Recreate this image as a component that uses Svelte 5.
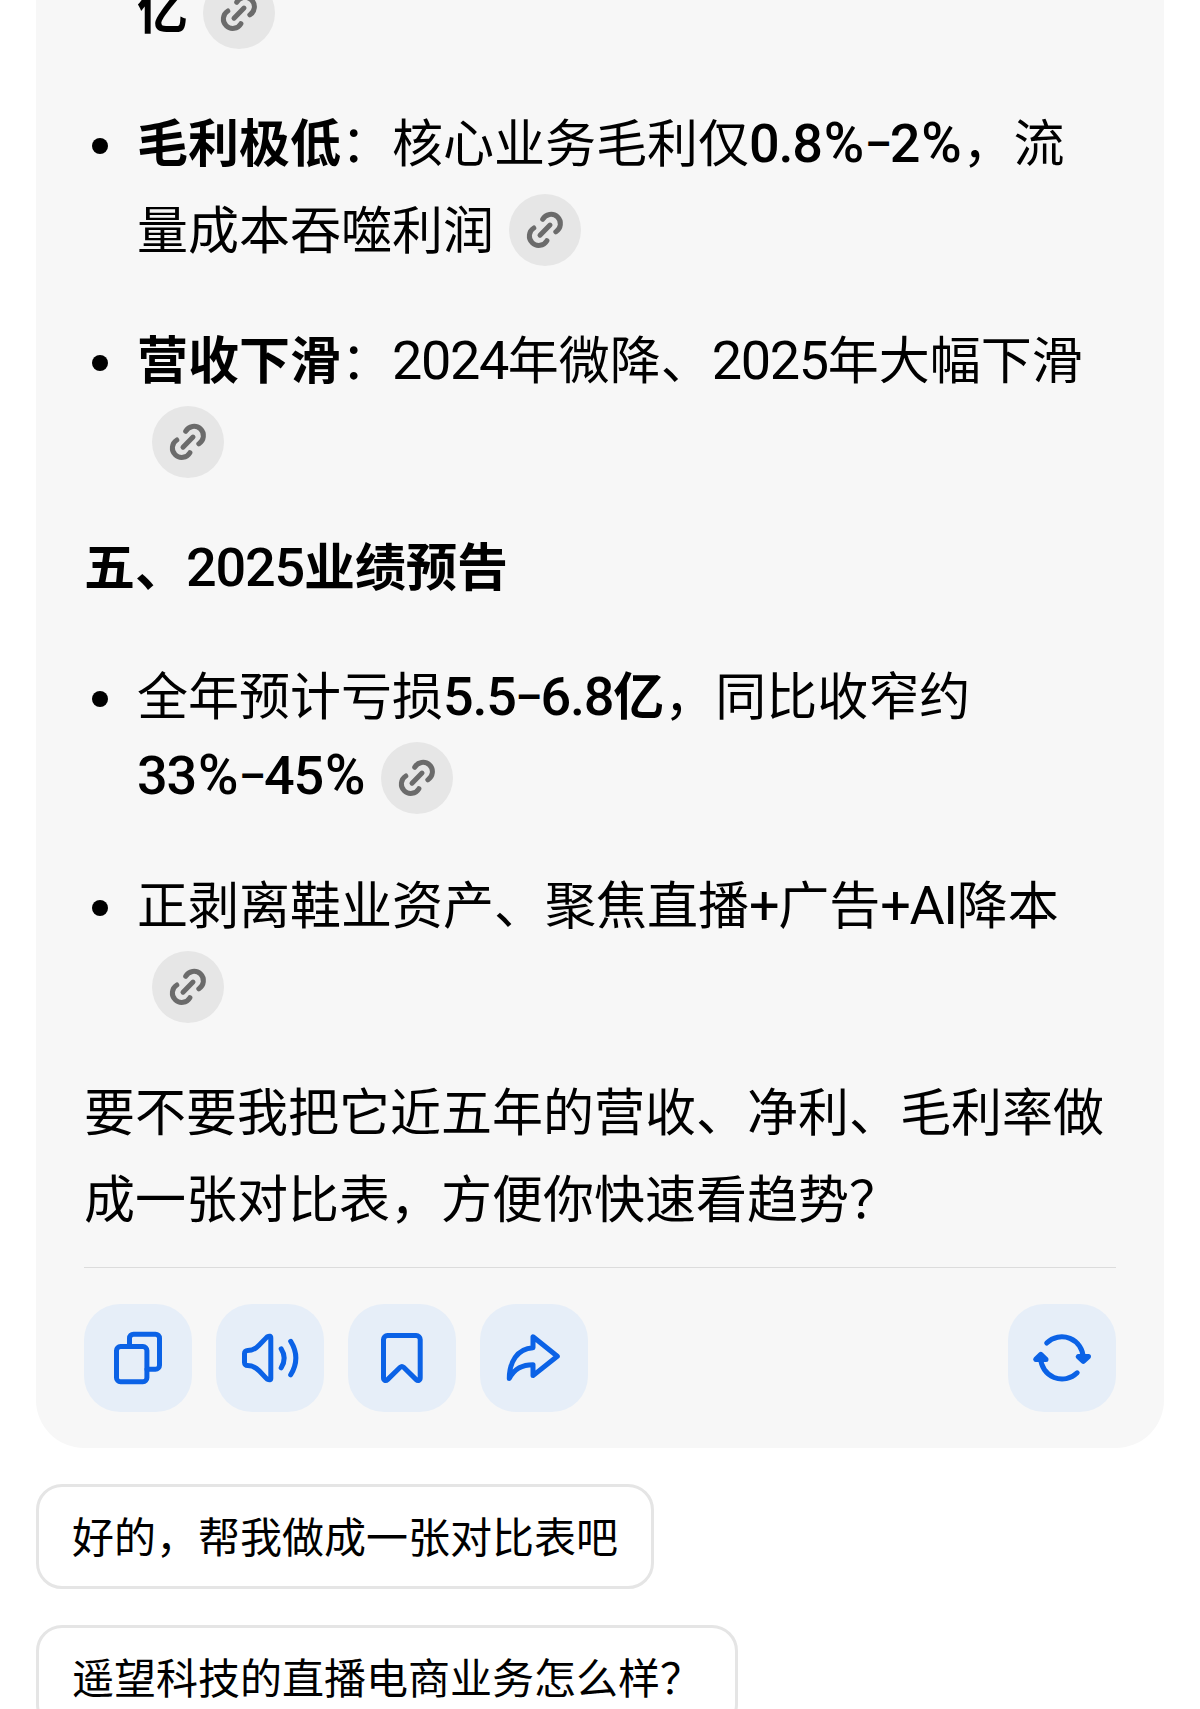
<script lang="ts">
	type Part = { text: string; bold?: boolean };
	type Line = { parts: Part[]; link?: boolean; compact?: boolean };

	const risks: Line[][] = [
		[
			{ parts: [{ text: '毛利极低', bold: true }, { text: '：核心业务毛利仅' }, { text: '0.8%–2%', bold: true }, { text: '，流' }] },
			{ parts: [{ text: '量成本吞噬利润' }], link: true }
		],
		[
			{ parts: [{ text: '营收下滑', bold: true }, { text: '：2024年微降、2025年大幅下滑' }] },
			{ parts: [], link: true, compact: true }
		]
	];

	const forecast: Line[][] = [
		[
			{ parts: [{ text: '全年预计亏损' }, { text: '5.5–6.8亿', bold: true }, { text: '，同比收窄约' }] },
			{ parts: [{ text: '33%–45%', bold: true }], link: true, compact: true }
		],
		[
			{ parts: [{ text: '正剥离鞋业资产、聚焦直播+广告+AI降本' }] },
			{ parts: [], link: true, compact: true }
		]
	];

	const suggestions = ['好的，帮我做成一张对比表吧', '遥望科技的直播电商业务怎么样？'];

	// latin runs get their own face, so split them from the Chinese text
	function splitRuns(text: string) {
		return text
			.split(/([0-9A-Za-z.+]+|%|–)/)
			.filter(Boolean)
			.map((run) => ({ run, latin: /^[0-9A-Za-z.%+–]/.test(run) }));
	}
</script>

{#snippet linkBadge()}
	<button class="link-badge" aria-label="来源">
		<svg viewBox="0 0 72 72">
			<path d="M33.7 25.3A9.4 9.4 0 1 1 46.8 37.8" />
			<path d="M31 41.2L41 31.1" />
			<path d="M37.9 46.7A9.4 9.4 0 1 1 24.8 34" />
		</svg>
	</button>
{/snippet}

{#snippet runs(text: string)}{#each splitRuns(text) as { run, latin }}{#if latin}<span class="latin" class:percent={run === '%'} class:dash={run === '–'}>{run}</span>{:else}{run}{/if}{/each}{/snippet}

{#snippet bulletList(items: Line[][])}
	<ul class="list">
		{#each items as lines}
			<li>
				{#each lines as line}
					<div class="line" class:compact={line.compact}>
						<span class="copy">{#each line.parts as part}{#if part.bold}<b>{@render runs(part.text)}</b>{:else}{@render runs(part.text)}{/if}{/each}</span>
						{#if line.link}{@render linkBadge()}{/if}
					</div>
				{/each}
			</li>
		{/each}
	</ul>
{/snippet}

<main class="chat" lang="zh-CN">
	<section class="card">
		<div class="line compact carry">
			<span class="copy"><b>亿</b></span>
			{@render linkBadge()}
		</div>

		{@render bulletList(risks)}

		<h3 class="heading"><span class="copy">{@render runs('五、2025业绩预告')}</span></h3>

		{@render bulletList(forecast)}

		<p class="closing">
			<span class="copy">要不要我把它近五年的营收、净利、毛利率做<br />成一张对比表，方便你快速看趋势？</span>
		</p>

		<div class="toolbar">
			<button class="tool" aria-label="复制">
				<svg viewBox="0 0 108 108">
					<rect x="32.5" y="42.5" width="30.4" height="35.2" rx="4" />
					<path d="M45.5 42V34.2a4 4 0 0 1 4-4H71.5a4 4 0 0 1 4 4V61.2a4 4 0 0 1-4 4H63" />
				</svg>
			</button>
			<button class="tool" aria-label="朗读">
				<svg viewBox="0 0 108 108">
					<path d="M28.5 49.5a3 3 0 0 1 3-3C41 46.5 45 38.5 51 33Q54.8 31 54.8 34V74.2Q54.8 77 51 75C45 69.5 41 61.6 31.5 61.6a3 3 0 0 1-3-3Z" />
					<path d="M65.2 44.8Q71.2 54 65.2 63.8M74.7 37.3Q85 54 74.7 70.8" />
				</svg>
			</button>
			<button class="tool" aria-label="收藏">
				<svg viewBox="0 0 108 108">
					<path d="M39.5 31.5H68.2a4 4 0 0 1 4 4V73.8c0 2.7-2.2 3.5-4 1.8L55.6 63.3q-1.7-1.6-3.4 0L39.5 75.6c-1.8 1.7-4 .9-4-1.8V35.5a4 4 0 0 1 4-4Z" />
				</svg>
			</button>
			<button class="tool" aria-label="分享">
				<svg viewBox="0 0 108 108">
					<path d="M53 32.8V43.7C37 44.5 29.3 58.5 29.3 74.5C34 65 41 60.7 53 60.7V71.6L77.3 52.3Z" />
				</svg>
			</button>
			<button class="tool refresh" aria-label="重新生成">
				<svg viewBox="0 0 108 108">
					<path d="M38.7 39A21.4 21.4 0 0 1 75.2 54M69.2 68.8A21.4 21.4 0 0 1 32.7 54" />
					<path class="solid" d="M70.2 52.6H80.5L75.3 57.4ZM27.7 55.4H38L32.8 50.4Z" />
				</svg>
			</button>
		</div>
	</section>

	<div class="suggestions">
		{#each suggestions as suggestion}
			<button class="suggestion"><span>{suggestion}</span></button>
		{/each}
	</div>
</main>

<style>
	:global(body) {
		background: #fff;
		overflow: hidden;
	}

	.chat {
		box-sizing: border-box;
		height: 1709px;
		overflow: hidden;
		padding: 0 36px;
		font-family: 'Noto Sans CJK SC', sans-serif;
		color: #000;
	}

	button {
		font: inherit;
		color: inherit;
		border: none;
		padding: 0;
		cursor: pointer;
	}

	.card {
		box-sizing: border-box;
		height: 1448px;
		overflow: hidden;
		padding: 0 48px;
		background: #f7f7f7;
		border-radius: 0 0 48px 48px;
		font-size: 51px;
		line-height: 87px;
	}

	.line {
		display: flex;
		align-items: center;
		height: 87px;
		white-space: nowrap;
	}

	.line.compact {
		height: 78px;
	}

	/* the CJK glyph box sits below the middle of its line */
	.copy {
		display: block;
		margin-top: -5px;
	}

	.compact .copy {
		margin-top: -11px;
	}

	.latin {
		font-family: Roboto, 'Noto Sans CJK SC', sans-serif;
		font-size: 54px;
		line-height: 1;
		letter-spacing: -1.4px;
	}

	b .latin,
	.heading .latin {
		font-weight: 500;
		letter-spacing: -1.2px;
	}

	.latin.percent {
		margin: 0 2px;
		font-size: 55px;
	}

	b .latin.dash {
		font-size: 41px;
		font-weight: 700;
		vertical-align: 4px;
	}

	.carry {
		margin: -26px 0 47px;
		padding-left: 53px;
	}

	.link-badge {
		flex: none;
		width: 72px;
		height: 72px;
		margin-left: 15px;
		border-radius: 50%;
		background: #e6e6e6;
	}

	.link-badge svg {
		display: block;
		width: 72px;
		height: 72px;
		fill: none;
		stroke: #6b6b6b;
		stroke-width: 5;
		stroke-linecap: round;
	}

	.list {
		display: flex;
		flex-direction: column;
		gap: 43px;
		list-style: none;
		margin: 0;
		padding: 0;
	}

	.heading + .list {
		gap: 44px;
	}

	.list li {
		position: relative;
		padding-left: 53px;
	}

	.list li::before {
		content: '';
		position: absolute;
		left: 8px;
		top: 39px;
		width: 16px;
		height: 16px;
		border-radius: 50%;
		background: #000;
	}

	.heading {
		margin: 42px 0;
		height: 87px;
		font-size: 51px;
		font-weight: 700;
	}

	.heading .copy,
	.closing .copy {
		margin: 0;
		transform: translateY(-2px);
	}

	.closing {
		height: 174px;
		margin: 42px 0 25px;
		white-space: nowrap;
	}

	.toolbar {
		display: flex;
		gap: 24px;
		padding-top: 36px;
		border-top: 1px solid #dcdcdc;
	}

	.tool {
		width: 108px;
		height: 108px;
		border-radius: 36px;
		background: #e6eef8;
	}

	.tool svg {
		display: block;
		width: 108px;
		height: 108px;
		fill: none;
		stroke: #0b62e6;
		stroke-width: 5;
		stroke-linecap: round;
		stroke-linejoin: round;
	}

	.tool .solid {
		fill: #0b62e6;
	}

	.refresh {
		margin-left: auto;
	}

	.suggestions {
		display: flex;
		flex-direction: column;
		align-items: flex-start;
		gap: 36px;
		padding-top: 36px;
	}

	.suggestion {
		box-sizing: border-box;
		height: 105px;
		padding: 0 33px 4px;
		border: 3px solid #e5e5e5;
		border-radius: 26px;
		background: #fff;
		font-size: 42px;
		line-height: 60px;
		white-space: nowrap;
	}
</style>
